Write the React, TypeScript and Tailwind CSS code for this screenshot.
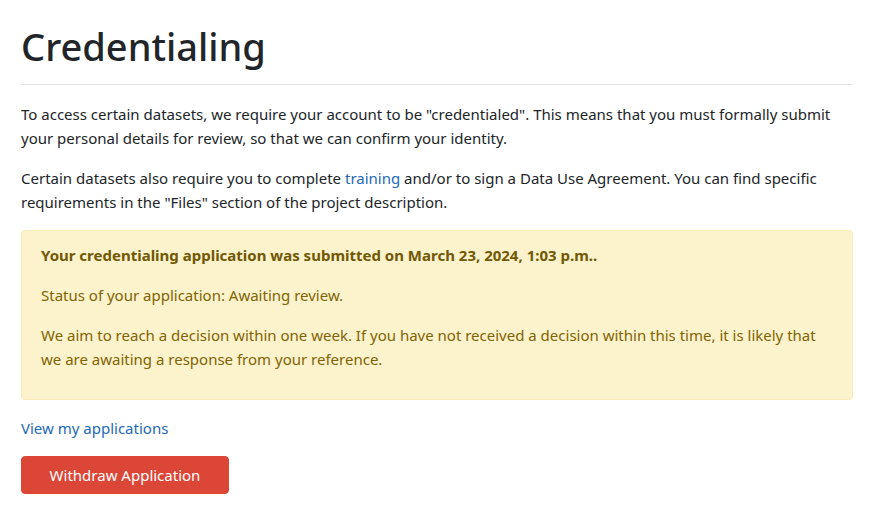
export default function App() {
  return (
    <div
      className="min-h-[520px] bg-white text-[15px] leading-[24px] text-[#212529]"
      style={{ fontFamily: '"Segoe UI", "Noto Sans", "Open Sans", sans-serif' }}
    >
      <div className="ml-[21px] w-[832px] pt-[23px]">
        <h1 className="text-[38px] font-medium leading-[46px] text-[#212529]">Credentialing</h1>
        <hr className="mt-[15px] mb-[17px] border-t border-[#e6e6e6]" />
        <p className="mb-[16px]">
          To access certain datasets, we require your account to be "credentialed". This means that you must formally
          submit your personal details for review, so that we can confirm your identity.
        </p>
        <p className="mb-[16px]">
          Certain datasets also require you to complete{" "}
          <a href="#" className="text-[#2369b8]">
            training
          </a>{" "}
          and/or to sign a Data Use Agreement. You can find specific requirements in the "Files" section of the project
          description.
        </p>
        <div className="mb-[16px] rounded-[4px] border border-[#faecb8] bg-[#fcf2cb] px-[19px] pt-[12px] pb-[12px] text-[#7f6405]">
          <p className="mb-[16px] font-bold text-[#705805]">
            Your credentialing application was submitted on March 23, 2024, 1:03 p.m..
          </p>
          <p className="mb-[16px]">Status of your application: Awaiting review.</p>
          <p className="mb-[16px]">
            We aim to reach a decision within one week. If you have not received a decision within this time, it is
            likely that we are awaiting a response from your reference.
          </p>
        </div>
        <a href="#" className="block text-[#2369b8]">
          View my applications
        </a>
        <button className="mt-[16px] h-[38px] w-[208px] rounded-[4px] border border-[#dc4636] bg-[#dc4636] text-[15px] text-white">
          Withdraw Application
        </button>
      </div>
    </div>
  );
}
